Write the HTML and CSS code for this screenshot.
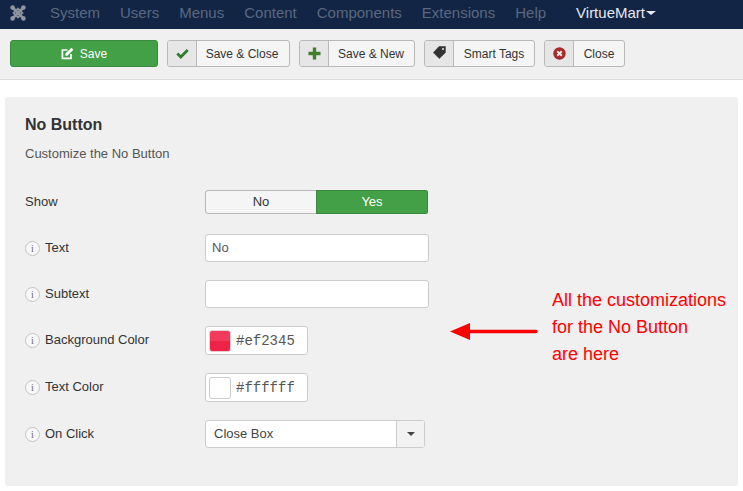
FILE: index.html
```html
<!DOCTYPE html>
<html lang="en">
<head>
<meta charset="utf-8">
<title>No Button</title>
<link rel="stylesheet" href="styles.css">
</head>
<body>
<nav class="navbar">
  <svg class="logo" width="16" height="16" viewBox="0 0 16 16"><g fill="none" stroke="#8f949e"><path d="M3 3L13 13M13 3L3 13" stroke-width="2.6"/><path d="M8 3.6L12.4 8L8 12.4L3.6 8Z" stroke-width="1.8"/></g><g fill="#8f949e"><circle cx="2.6" cy="2.6" r="2.3"/><circle cx="13.4" cy="2.6" r="2.3"/><circle cx="2.6" cy="13.4" r="2.3"/><circle cx="13.4" cy="13.4" r="2.3"/></g></svg>
  <span class="nav-item">System</span>
  <span class="nav-item">Users</span>
  <span class="nav-item">Menus</span>
  <span class="nav-item">Content</span>
  <span class="nav-item">Components</span>
  <span class="nav-item">Extensions</span>
  <span class="nav-item">Help</span>
  <span class="nav-active">VirtueMart<i class="caret-white"></i></span>
</nav>
<div class="toolbar">
  <button class="btn-save"><svg width="13" height="13" viewBox="0 0 13 13"><path d="M10 7V11.4H1.4V3H6.4" fill="none" stroke="#fff" stroke-width="1.7"/><path d="M4.4 6.6L10.4 .8L12.4 2.8L6.4 8.8H4.4Z" fill="#fff"/></svg><span class="save-text">Save</span></button>
  <div class="btn btn-close-save"><span class="btn-icon"><svg width="13" height="11" viewBox="0 0 13 11"><path d="M1.3 5.5L4.8 9L11.7 2" fill="none" stroke="#2f7d32" stroke-width="2.8"/></svg></span><span class="btn-label">Save &amp; Close</span></div>
  <div class="btn btn-new"><span class="btn-icon"><svg width="13" height="13" viewBox="0 0 13 13"><path d="M6.5 0.5V12.5M.5 6.5H12.5" stroke="#3d7f2c" stroke-width="3.4"/></svg></span><span class="btn-label">Save &amp; New</span></div>
  <div class="btn btn-tags"><span class="btn-icon"><svg class="tag-icon" width="13" height="13" viewBox="0 0 13 13"><path d="M6 .6H12.4V6.6L6.3 12.6L.4 6.6Z" fill="#333" stroke="#333" stroke-width=".6" stroke-linejoin="round"/><circle cx="10" cy="3" r="1" fill="#e8e8e8"/></svg></span><span class="btn-label">Smart Tags</span></div>
  <div class="btn btn-close"><span class="btn-icon"><svg width="13" height="13" viewBox="0 0 13 13"><circle cx="6.5" cy="6.5" r="6.2" fill="#a52a2a"/><path d="M4.2 4.2L8.8 8.8M8.8 4.2L4.2 8.8" stroke="#f0e6e6" stroke-width="2"/></svg></span><span class="btn-label">Close</span></div>
</div>
<main class="panel">
  <h2 class="title">No Button</h2>
  <p class="desc">Customize the No Button</p>
  <div class="rows">
    <div class="row row-show">
      <div class="label">Show</div>
      <div class="toggle"><span class="toggle-no">No</span><span class="toggle-yes">Yes</span></div>
    </div>
    <div class="row row-text">
      <div class="label"><i class="info">i</i>Text</div>
      <div class="input">No</div>
    </div>
    <div class="row row-text">
      <div class="label"><i class="info">i</i>Subtext</div>
      <div class="input"></div>
    </div>
    <div class="row row-color">
      <div class="label"><i class="info">i</i>Background Color</div>
      <div class="color"><span class="swatch swatch-red"></span><span class="hex">#ef2345</span></div>
    </div>
    <div class="row row-color">
      <div class="label"><i class="info">i</i>Text Color</div>
      <div class="color"><span class="swatch swatch-white"></span><span class="hex">#ffffff</span></div>
    </div>
    <div class="row">
      <div class="label"><i class="info">i</i>On Click</div>
      <div class="select"><span class="select-value">Close Box</span><span class="select-arrow"><i class="caret-dark"></i></span></div>
    </div>
  </div>
  <div class="note">
    <svg class="arrow" width="88" height="20" viewBox="0 0 88 20"><path d="M20 10.5H86" stroke="#f00" stroke-width="3.4" stroke-linecap="round"/><path d="M0 10.5L20 2V19Z" fill="#f00"/></svg>
    <p class="note-text">All the customizations<br>for the No Button<br>are here</p>
  </div>
</main>
</body>
</html>
```

FILE: styles.css
```css
* { box-sizing: border-box; }
html, body { margin: 0; height: 491px; overflow: hidden; }
body { background: #fff; font-family: "Liberation Sans", Arial, sans-serif; font-size: 13px; color: #333; }

.navbar { height: 29px; background: #132545; display: flex; align-items: center; padding: 0 0 4px 10px; overflow: hidden; }
.logo { margin-right: 24px; }
.nav-item { color: #5a6880; font-size: 15px; margin-right: 20px; }
.nav-active { color: #e6e9ee; font-size: 15px; margin-left: 10px; display: flex; align-items: center; }
.caret-white { width: 0; height: 0; margin: 1px 0 0 1px; border-style: solid; border-color: #e6e9ee transparent transparent; border-width: 4px 5px 0; }

.toolbar { height: 51px; background: #f0f0f0; border-bottom: 1px solid #dedede; display: flex; align-items: center; padding: 0 10px 2px; gap: 9px; }
.btn-save { width: 148px; height: 27px; background: #43a047; border: 1px solid #398a3d; border-radius: 3px; color: #fff; font: 12px "Liberation Sans", Arial, sans-serif; display: flex; align-items: center; justify-content: center; gap: 6px; padding: 0; }
.save-text { padding-top: 2px; }
.btn { height: 27px; display: flex; background: #f5f5f5; border: 1px solid #b8b8b8; border-radius: 3px; font-size: 12px; overflow: hidden; }
.btn-icon { width: 29px; background: #e6e6e6; border-right: 1px solid #b8b8b8; display: flex; align-items: center; justify-content: center; }
.tag-icon { margin-bottom: 2px; }
.btn-label { flex: 1; display: flex; align-items: center; justify-content: center; padding-top: 2px; }
.btn-close-save { width: 123px; }
.btn-close-save .btn-label { padding-right: 2px; }
.btn-new { width: 116px; }
.btn-new .btn-label { padding-right: 1px; }
.btn-tags { width: 111px; }
.btn-close { width: 81px; }

.panel { position: relative; margin: 17px 5px 0; height: 389px; background: #f0f0f0; border-radius: 3px; padding: 18px 20px; }
.title { margin: 0; font-size: 16px; line-height: 20px; font-weight: bold; color: #333; }
.desc { margin: 10px 0 0; font-size: 13px; line-height: 18px; color: #555; }
.rows { margin-top: 27px; }
.row { display: flex; align-items: center; }
.row-show { height: 24px; margin-bottom: 20px; }
.row-text { height: 28px; margin-bottom: 18px; }
.row-color { height: 29px; margin-bottom: 18px; }
.label { width: 180px; display: flex; align-items: center; padding-bottom: 2px; font-size: 13px; color: #333; }
.info { width: 15px; height: 15px; margin: 2px 5px 0 0; border: 1px solid #c4c4c4; border-radius: 50%; background: #f8f8f8; color: #666; font: 10px/13px "Liberation Serif", serif; text-align: center; }
.toggle { width: 223px; height: 24px; display: flex; border-radius: 3px; overflow: hidden; }
.toggle-no { width: 111px; padding-bottom: 2px; background: #f5f5f5; border: 1px solid #b8b8b8; border-right: 0; border-radius: 3px 0 0 3px; display: flex; align-items: center; justify-content: center; }
.toggle-yes { flex: 1; padding-bottom: 2px; background: #43a047; border: 1px solid #398a3d; color: #fff; display: flex; align-items: center; justify-content: center; }
.input { width: 224px; height: 28px; background: #fff; border: 1px solid #ccc; border-radius: 3px; padding: 0 6px; line-height: 26px; font-size: 13px; color: #555; }
.color { width: 103px; height: 29px; background: #fff; border: 1px solid #ccc; border-radius: 3px; display: flex; align-items: center; padding-left: 3px; gap: 5px; }
.swatch { width: 22px; height: 22px; border-radius: 3px; }
.swatch-red { background: linear-gradient(#f23a5a 50%, #ef2345 50%); border: 1px solid #e9cdd2; }
.swatch-white { background: #fff; border: 1px solid #ccc; }
.hex { font: 14px "Liberation Mono", monospace; color: #555; }
.select { width: 220px; height: 28px; background: #fff; border: 1px solid #ccc; border-radius: 3px; display: flex; align-items: center; }
.select-value { flex: 1; padding: 0 0 2px 8px; color: #444; }
.select-arrow { width: 28px; height: 100%; background: #f2f2f2; border-left: 1px solid #ccc; display: flex; align-items: center; justify-content: center; }
.caret-dark { width: 0; height: 0; border: 4px solid transparent; border-top-color: #444; border-bottom: 0; }

.note { position: absolute; left: 445px; top: 190px; display: flex; align-items: flex-start; }
.arrow { margin-top: 34px; margin-right: 14px; }
.note-text { margin: 0; color: #f00; font-size: 18px; line-height: 27px; }
```
